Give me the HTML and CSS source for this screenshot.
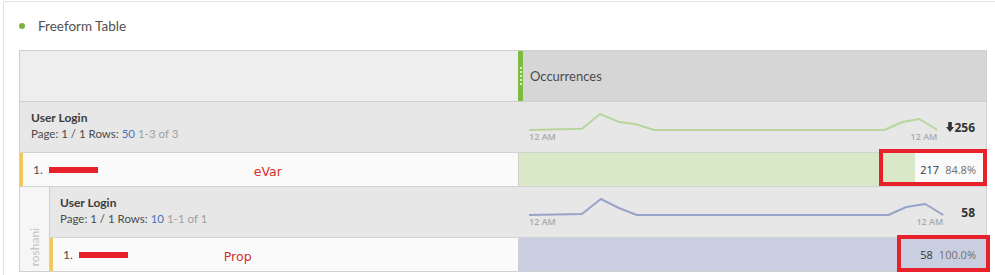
FILE: index.html
```html
<!DOCTYPE html>
<html lang="en">
<head>
<meta charset="utf-8">
<title>Freeform Table</title>
<link rel="stylesheet" href="styles.css">
</head>
<body>
<div class="panel">
  <div class="title"><span class="dot"></span><span class="title-text">Freeform Table</span></div>
  <div class="ft">
    <div class="hdr-left"></div>
    <div class="hdr-metric"><span class="grip"><span class="grip-dots"></span></span><span class="hdr-label">Occurrences</span></div>

    <div class="grp grp-top">
      <div class="grp-name">User Login</div>
      <div class="grp-meta">Page: 1 / 1 Rows: <span class="rows">50</span> <span class="range">1-3 of 3</span></div>
    </div>
    <div class="grp-chart">
      <div class="spark">
        <svg class="spark-svg" viewBox="0 0 408 29" preserveAspectRatio="none">
          <polyline class="line-green" points="0,28 53,26.7 71,12 89,19.7 107,22.3 125,28 355,28 373,20 390,17 408,28"/>
        </svg>
        <div class="spark-labels"><span>12 AM</span><span>12 AM</span></div>
      </div>
      <div class="total total-a"><svg class="arrow" viewBox="0 0 8 10"><path d="M2.2 0h3.6v5h2.2L4 10 0 5h2.2z"/></svg>256</div>
    </div>

    <div class="item item-top">
      <span class="num">1.</span><span class="redact"></span><span class="note note-evar">eVar</span>
    </div>
    <div class="val">
      <div class="bar bar-green" style="width:84.8%"></div>
      <div class="val-text"><span class="count">217</span><span class="pct">84.8%</span></div>
      <div class="mark mark-a"></div>
    </div>

    <div class="strip"><span class="strip-text">roshani</span></div>
    <div class="grp grp-nested">
      <div class="grp-name">User Login</div>
      <div class="grp-meta">Page: 1 / 1 Rows: <span class="rows">10</span> <span class="range">1-1 of 1</span></div>
    </div>
    <div class="grp-chart">
      <div class="spark">
        <svg class="spark-svg" viewBox="0 0 415 29" preserveAspectRatio="none">
          <polyline class="line-blue" points="0,28 53,27 72,12 90,21 108,28 360,28 378,20 397,17 415,28"/>
        </svg>
        <div class="spark-labels"><span>12 AM</span><span>12 AM</span></div>
      </div>
      <div class="total total-b">58</div>
    </div>

    <div class="item item-nested">
      <span class="num">1.</span><span class="redact"></span><span class="note note-prop">Prop</span>
    </div>
    <div class="val val-last">
      <div class="bar bar-blue" style="width:100%"></div>
      <div class="val-text"><span class="count">58</span><span class="pct">100.0%</span></div>
      <div class="mark mark-b"></div>
    </div>
  </div>
</div>
</body>
</html>
```

FILE: styles.css
```css
* { box-sizing: border-box; }

body {
  margin: 0;
  background: #ffffff;
  font-family: Lato, "Open Sans", sans-serif;
  color: #4b4b4b;
}

.panel {
  margin: 1px 0 0 3px;
  height: 274px;
  border-top: 1px solid #e3e3e3;
  border-left: 1px solid #e3e3e3;
  padding-left: 15px;
  overflow: hidden;
}

.title {
  height: 48px;
  display: flex;
  align-items: center;
}

.dot {
  width: 6px;
  height: 6px;
  border-radius: 50%;
  background: #7cb342;
  margin-right: 13px;
}

.title-text {
  font-size: 13.5px;
  color: #505050;
}

.ft {
  width: 968px;
  display: grid;
  grid-template-columns: 30px 468px 468px;
  grid-template-rows: 51px 51px 34px 51px 34px;
  border: 1px solid #cfcfcf;
  border-bottom: none;
}

.hdr-left {
  grid-column: 1 / 3;
  background: #eeeeee;
  border-bottom: 1px solid #cfcfcf;
}

.hdr-metric {
  background: #d6d6d6;
  border-bottom: 1px solid #cfcfcf;
  display: flex;
  align-items: center;
}

.grip {
  align-self: stretch;
  width: 5px;
  background: #7cbc41;
  display: flex;
  align-items: center;
  justify-content: center;
}

.grip-dots {
  width: 2px;
  height: 18px;
  border-left: 2px dotted rgba(255, 255, 255, 0.75);
}

.hdr-label {
  margin-left: 7px;
  font-size: 13px;
  color: #4b4b4b;
}

.grp {
  background: #e7e7e7;
  border-bottom: 1px solid #d2d2d2;
  padding-top: 8px;
  font-size: 11.5px;
  line-height: 16px;
}

.grp-top {
  grid-column: 1 / 3;
  padding-left: 11px;
}

.grp-nested {
  grid-column: 2 / 3;
  padding-left: 10px;
}

.grp-name {
  font-size: 12px;
  font-weight: 700;
  color: #3c3c3c;
}

.grp-meta {
  color: #4b4b4b;
}

.rows { color: #4a72b8; }
.range { color: #a0a0a0; }

.grp-chart {
  background: #e7e7e7;
  border-bottom: 1px solid #d2d2d2;
  display: flex;
  align-items: center;
  padding: 0 11px;
}

.spark {
  flex: 1;
  align-self: flex-start;
  display: flex;
  flex-direction: column;
}

.spark-svg {
  display: block;
  width: 100%;
  height: 29px;
  overflow: visible;
}

.spark-svg polyline {
  fill: none;
  stroke-width: 2;
  stroke-linejoin: round;
  vector-effect: non-scaling-stroke;
}

.line-green { stroke: #b8d59b; }
.line-blue { stroke: #98a3ca; }

.spark-labels {
  display: flex;
  justify-content: space-between;
  font-family: "Open Sans", sans-serif;
  font-size: 9px;
  font-weight: 600;
  line-height: 12px;
  color: #a9a9a9;
}

.total {
  font-family: "Open Sans", sans-serif;
  font-size: 12px;
  font-weight: 700;
  color: #333333;
  display: flex;
  align-items: center;
}

.total-a { margin-left: 9px; }
.total-b { margin-left: 18px; }

.arrow {
  width: 8px;
  height: 10px;
  fill: #333333;
}

.item {
  background: #fafafa;
  border-bottom: 1px solid #d2d2d2;
  box-shadow: inset 3px 0 0 #f2c85a;
  display: flex;
  align-items: center;
  padding-left: 13px;
  font-size: 12px;
  color: #4b4b4b;
}

.item-top { grid-column: 1 / 3; }
.item-nested { grid-column: 2 / 3; }

.redact {
  width: 49px;
  height: 6px;
  background: #e8202a;
  margin-left: 6px;
}

.note {
  font-family: "DejaVu Sans", sans-serif;
  font-size: 12.5px;
  color: #d4302c;
  padding-top: 4px;
}

.note-evar { margin-left: 156px; }
.note-prop { margin-left: 96px; }

.strip {
  grid-column: 1 / 2;
  grid-row: 4 / 6;
  background: #f6f6f6;
  border-right: 1px solid #cfcfcf;
  border-bottom: 1px solid #cfcfcf;
  display: flex;
  align-items: flex-end;
  justify-content: center;
  padding-bottom: 5px;
}

.strip-text {
  writing-mode: vertical-rl;
  transform: rotate(180deg);
  font-size: 12px;
  color: #c4c4c4;
}

.val {
  position: relative;
  display: grid;
  background: #fafafa;
  border-left: 1px solid #d0d0d0;
  border-bottom: 1px solid #d2d2d2;
}

.val-last { border-bottom-color: #cfcfcf; }

.bar {
  grid-area: 1 / 1;
  height: 100%;
}

.bar-green { background: #d9e8c6; }
.bar-blue { background: #c9cfe1; }

.val-text {
  grid-area: 1 / 1;
  display: flex;
  align-items: center;
  justify-content: flex-end;
  padding-right: 10px;
  font-family: "Open Sans", sans-serif;
  font-size: 11px;
}

.count { color: #333333; }
.pct { color: #6f6f6f; margin-left: 6px; }

.mark {
  position: absolute;
  border: 4px solid #e8202a;
}

.mark-a {
  left: 360px;
  top: -4px;
  width: 108px;
  height: 37px;
}

.mark-b {
  left: 378px;
  top: -3px;
  width: 93px;
  height: 37px;
}
```
